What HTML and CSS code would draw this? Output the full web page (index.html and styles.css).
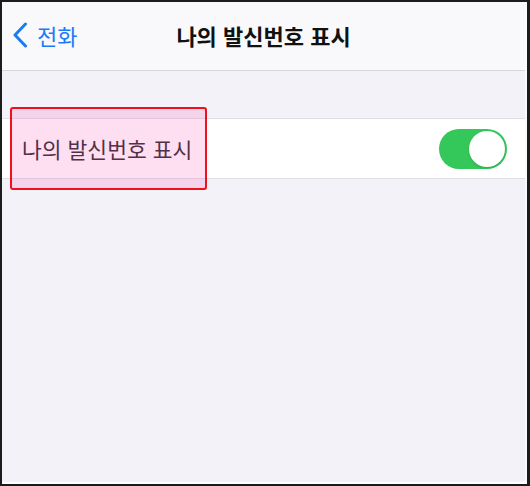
FILE: index.html
```html
<!DOCTYPE html>
<html lang="ko">
<head>
<meta charset="utf-8">
<link rel="stylesheet" href="styles.css">
</head>
<body>
<div class="frame">
  <div class="screen">
    <header class="nav">
      <div class="back">
        <svg class="chev" width="17" height="26" viewBox="0 0 17 26"><path d="M13.5 2 L3 13 L13.5 24" fill="none" stroke="#1a7cf5" stroke-width="3" stroke-linecap="round" stroke-linejoin="round"/></svg>
        <span class="back-label">전화</span>
      </div>
      <h1 class="title">나의 발신번호 표시</h1>
    </header>
    <main class="content">
      <div class="row">
        <span class="row-label">나의 발신번호 표시</span>
        <div class="toggle"><div class="knob"></div></div>
        <div class="highlight"></div>
      </div>
    </main>
  </div>
</div>
</body>
</html>
```
FILE: styles.css
```css
html, body { margin: 0; padding: 0; }
body { font-family: "Noto Sans CJK KR", "Noto Sans", sans-serif; }
.frame {
  width: 530px; height: 486px; box-sizing: border-box;
  border-style: solid; border-color: #1c1c1c;
  border-width: 2px 3px 2px 2px;
  background: #1c1c1c;
}
.screen {
  height: 100%; box-sizing: border-box;
  display: flex; flex-direction: column;
  background: #f3f2f8;
  border-right: 2px solid #fbfbfd;
  border-bottom: 2px solid #ffffff;
}
.nav {
  height: 69px; box-sizing: border-box;
  background: #f9f9fb;
  border-bottom: 1px solid #d6d6da;
  display: flex; align-items: center; justify-content: center;
  position: relative;
}
.back {
  position: absolute; left: 10px; top: 0; bottom: 0;
  display: flex; align-items: center; gap: 8px;
  padding-bottom: 2px;
}
.back-label { color: #1a7cf5; font-size: 22px; line-height: 1; }
.title { margin: 0; font-size: 22px; font-weight: 700; color: #111; line-height: 1; padding-bottom: 2px; }
.content { flex: 1; padding-top: 47px; }
.row {
  position: relative;
  height: 61px; box-sizing: border-box;
  background: #fff;
  border-top: 1px solid #e0dfe4;
  border-bottom: 1px solid #e0dfe4;
  display: flex; align-items: center; justify-content: space-between;
  padding: 0 18px 0 20px;
}
.row-label { font-size: 21.5px; color: #2f2a30; line-height: 1; }
.toggle {
  width: 68px; height: 40px; border-radius: 20px;
  background: #34c759; box-sizing: border-box; padding: 2px;
  display: flex; justify-content: flex-end;
}
.knob { width: 36px; height: 36px; border-radius: 50%; background: #fff; box-shadow: 0 1px 2px rgba(0,0,0,0.15); }
.highlight {
  position: absolute; left: 8px; top: -12px;
  width: 197px; height: 83px; box-sizing: border-box;
  border: 2px solid #f0101c; border-radius: 3px;
  background: rgba(250, 80, 180, 0.18);
}
```
